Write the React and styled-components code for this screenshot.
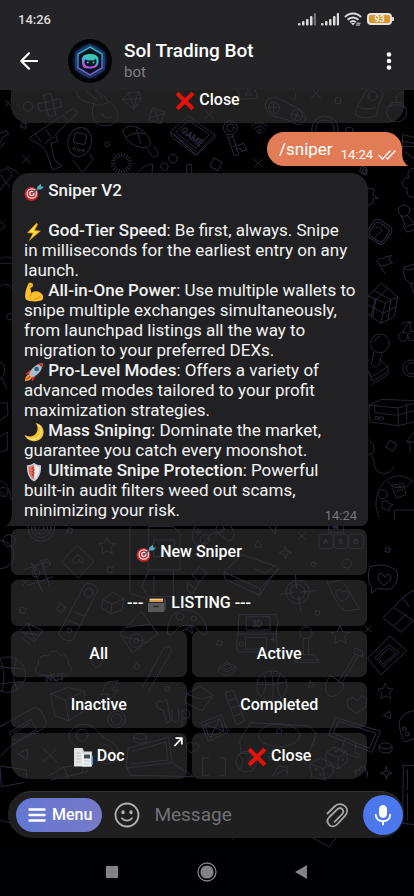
import React, { useState } from "react";
import styled, { createGlobalStyle } from "styled-components";

const features = [
  {
    icon: "bolt",
    title: "God-Tier Speed",
    text: "Be first, always. Snipe\nin milliseconds for the earliest entry on any\nlaunch.",
  },
  {
    icon: "muscle",
    title: "All-in-One Power",
    text: "Use multiple wallets to\nsnipe multiple exchanges simultaneously,\nfrom launchpad listings all the way to\nmigration to your preferred DEXs.",
  },
  {
    icon: "rocket",
    title: "Pro-Level Modes",
    text: "Offers a variety of\nadvanced modes tailored to your profit\nmaximization strategies.",
  },
  {
    icon: "moon",
    title: "Mass Sniping",
    text: "Dominate the market,\nguarantee you catch every moonshot.",
  },
  {
    icon: "shield",
    title: "Ultimate Snipe Protection",
    text: "Powerful\nbuilt-in audit filters weed out scams,\nminimizing your risk.",
  },
];

const keyboard = [
  { icon: "target", label: "New Sniper", wide: true },
  { icon: "box", label: "LISTING", wide: true, dashes: true },
  { label: "All" },
  { label: "Active" },
  { label: "Inactive" },
  { label: "Completed" },
  { icon: "doc", label: "Doc", link: true },
  { icon: "cross", label: "Close" },
];

const emojis = {
  target: (
    <>
      <circle cx="7.500" cy="12" r="7" fill="#c4202b" />
      <circle cx="7.800" cy="11.500" r="5.300" fill="#f3e9e7" />
      <circle cx="7.800" cy="11.500" r="4.100" fill="#c8242f" />
      <circle cx="7.800" cy="11.500" r="2.700" fill="#f3e9e7" />
      <circle cx="7.800" cy="11.500" r="1.400" fill="#c8242f" />
      <path d="M8 11.500 15 6" stroke="#2b6d78" strokeWidth="1.300" />
      <path d="M13 7.500 13.400 4.500 17 1.800 17 4.400 20 4.800 17 7.400Z" fill="#4fb3bf" />
    </>
  ),
  bolt: (
    <>
      <path d="M12.500 1 3 11 8.800 11.400 4.400 19.400 17 8.800 11 8.300 14 2Z" fill="#f7a81b" />
      <path d="M12.200 2 5 10 10 10.400 7 16 14.600 9.600 9.400 9Z" fill="#ffe14d" />
    </>
  ),
  muscle: (
    <>
      <path
        d="M4.500 1.200C6.800.2 9.400 1.200 9 3.600 8.800 5 7.500 5.800 6.400 5.700L7.400 11.200C9 9 13 8.400 16 10.400 19.500 12.400 20.300 16.500 17.600 18.300 14 20 5 19.600 2.300 17.800.4 16.200 1 11 2.400 6.500Z"
        fill="#fbbf2d"
      />
      <path d="M7.400 11.200C7.300 12.600 6.800 13.800 5.800 14.500M10 16.800C12.500 17.200 15 16 16 14" stroke="#d98a16" strokeWidth="1" fill="none" />
      <path d="M4.800 3.500C6 3.200 7 3.500 8.600 3.300" stroke="#d98a16" strokeWidth=".8" fill="none" />
    </>
  ),
  rocket: (
    <>
      <path d="M1 19C1 15.500 2.500 13 5 12.500L8 15.500C7 18 4 19 1 19Z" fill="#f5a623" />
      <path d="M5.500 8.500 1 12 5 13 8.500 8Z" fill="#d32f2f" />
      <path d="M11.500 14.500 8.500 19.500 7.200 15.400 11 11Z" fill="#d32f2f" />
      <path d="M5 13C6.500 7 11 2 19 1 18.500 8 14 13.500 7.500 15.500Z" fill="#a9bcc8" />
      <path d="M14.500 2.200C16 1.500 17.500 1.100 19 1 19 2.800 18.500 4.300 17.900 5.600Z" fill="#d32f2f" />
      <circle cx="12.600" cy="7" r="2.300" fill="#2d5c86" />
      <path d="M2.500 17.500 6 14" stroke="#e2461f" strokeWidth="1.500" />
    </>
  ),
  moon: (
    <>
      <path d="M11.500 1C17 2 20 6 19.500 11 19 16.500 14 20 8.500 19 4.500 18.300 1.500 16 .5 13 5 15.500 10 14.500 12.300 11 14.500 7.500 13.800 3.500 11.500 1Z" fill="#f4c534" />
      <path d="M14.500 3C18 6 18.500 11 15.500 14.500 12.500 17.700 7 18 3.500 16" stroke="#ffe386" strokeWidth="1.300" fill="none" />
    </>
  ),
  shield: (
    <>
      <path d="M3 3.200C6 3.200 8.500 2 10 .8 11.500 2 14 3.200 17 3.200 17.500 10 15.500 16.500 10 19.500 4.500 16.500 2.500 10 3 3.200Z" fill="#c3cbd0" />
      <path d="M4.600 4.700C7 4.600 9 3.600 10 2.800V17.500C6 15 4.300 10 4.600 4.700Z" fill="#ea6a5c" />
      <path d="M10 2.800C11.500 4 13.500 4.600 15.400 4.700 15.600 10 14 15 10 17.500Z" fill="#f1ece9" />
      <path d="M10 5 8.500 6.500 10 8 8.500 9.500 10 11 8.500 12.500 10 14" stroke="#b93535" strokeWidth="1.200" fill="none" />
    </>
  ),
  box: (
    <>
      <path d="M1 4H17L19 6V16L17 18H1Z" fill="#3c3e40" />
      <path d="M1 3.500H17V9H1Z" fill="#242526" />
      <path d="M3 4.500H16V8H2Z" fill="#d79a4c" />
      <path d="M2.500 5.500H16" stroke="#f2cd8b" />
      <path d="M1 9H17V18H1Z" fill="#57595b" />
      <path d="M6 12.500H12" stroke="#2b2c2d" strokeWidth="1.500" />
    </>
  ),
  doc: (
    <>
      <path d="M1 1H9.500L11 4.500H19V19.500H1Z" fill="#d6d8d9" />
      <path d="M9 6.500H18V19.500H9Z" fill="#f0f1f1" />
      <path d="M1.500 1.500H9V19H1.500Z" fill="#e3e5e5" />
      <path d="M3 6H8M3 9H8M3 12H8M3 15H8M11 14H17M11 17H16" stroke="#b9bcbd" strokeWidth=".8" />
      <path d="M11 7.500H17V11.500H11Z" fill="#454b54" />
      <path d="M18.500 8 20 9V18H18.500Z" fill="#3f8fd9" />
    </>
  ),
  cross: <path d="M3.500.8 10 7.200 16.500.8 19.300 3.600 13 10 19.300 16.500 16.500 19.300 10 12.900 3.500 19.300.7 16.500 7 10 .7 3.600Z" fill="#e3120b" />,
};

function Emoji({ name }) {
  return (
    <EmojiSvg viewBox="0 0 20 20" aria-hidden="true">
      {emojis[name]}
    </EmojiSvg>
  );
}

const Sq = ({ x, y, s = 9, r = 20 }) => (
  <rect x={x - s} y={y - s} width={s * 2} height={s * 2} transform={`rotate(${r} ${x} ${y})`} />
);
const Ex = ({ x, y, s = 12 }) => (
  <path d={`M${x - s} ${y - s}L${x + s} ${y + s}M${x + s} ${y - s}L${x - s} ${y + s}`} />
);
const Star = ({ x, y, s = 1 }) => (
  <path
    transform={`translate(${x} ${y}) scale(${s})`}
    d="M0-27 9-9 28-7 14 7 19 26 1 17-16 27-13 7-27-6-8-9Z"
  />
);

// chat wallpaper, line doodles drawn at three times their final size
function Wallpaper() {
  return (
    <WallpaperSvg viewBox="0 0 414 896" preserveAspectRatio="xMidYMid slice" aria-hidden="true">
      <defs>
        <linearGradient id="ink" gradientUnits="userSpaceOnUse" x1="0" y1="0" x2="0" y2="2688">
          <stop offset="0.1" stopColor="#2b2a40" />
          <stop offset="0.25" stopColor="#28232f" />
          <stop offset="0.5" stopColor="#25232e" />
          <stop offset="0.7" stopColor="#1a2740" />
          <stop offset="1" stopColor="#12233c" />
        </linearGradient>
      </defs>
      <g transform="scale(.33333)" fill="none" stroke="url(#ink)" strokeWidth="3" strokeLinejoin="round" strokeLinecap="round">
        <circle cx="84" cy="320" r="14" />
        <path d="M130 286 152 280 158 301 180 296 185 319 163 325 168 345 147 350 141 329 119 334 113 312 136 307Z M136 307 158 301 163 325 141 329Z" />
        <Ex x={25} y={310} s={9} />
        <Ex x={78} y={478} />
        <Ex x={775} y={490} />
        <Ex x={628} y={343} />
        <Ex x={948} y={280} s={15} />
        <path d="M230 272C220 290 262 310 282 311 264 365 300 386 334 374 366 360 355 315 324 304 310 280 290 268 264 258M282 311C290 318 314 318 324 304M305 340A20 20 0 0 0 336 350M256 272 292 300M276 262 306 292" />
        <path d="M368 298 386 277 416 275 424 296 402 327ZM368 298 424 296M386 277 393 298 402 327M416 275 407 297 402 327" />
        <Sq x={470} y={347} s={19} r={20} />
        <path d="M464 328 476 366M452 353 488 341" />
        <path d="M90 412 218 326 235 337 167 402 173 424 152 430 164 480 186 498 158 510 136 448 118 433 95 421ZM105 402 125 426M138 388 150 409M135 432C142 420 150 415 162 412M190 345 201 361" />
        <ellipse cx="239" cy="426" rx="35" ry="44" transform="rotate(12 239 426)" />
        <rect x="222" y="400" width="36" height="31" rx="7" transform="rotate(12 240 416)" />
        <circle cx="223" cy="446" r="4" />
        <circle cx="236" cy="450" r="4" />
        <circle cx="249" cy="452" r="4" />
        <path d="M218 480 248 517 279 478 270 462" />
        <path d="M368 392C380 368 420 378 438 402 454 424 458 438 440 442 412 446 376 428 368 392ZM376 414C390 402 410 394 438 402M410 388 422 430M440 442C452 450 445 466 462 470 482 474 474 442 460 440" />
        <circle cx="322" cy="433" r="7" />
        {Array.from({ length: 20 }, (_, i) => (
          <path key={i} d="M365 470V458" transform={`rotate(${i * 18} 365 490)`} />
        ))}
        <path d="M512 395 565 348 644 404 589 463ZM512 395 516 412 588 466 646 412 644 404M528 396 567 361 628 404 588 444ZM520 402 590 456" />
        <text x="540" y="398" transform="rotate(38 545 398)" fontSize="27" strokeWidth="2" fontFamily="Roboto, sans-serif">GAME</text>
        <circle cx="691" cy="383" r="21" />
        <circle cx="691" cy="383" r="11" />
        <path d="M682 404 702 466 716 464 696 402M700 440 732 430 740 450 724 454 722 444 706 448M684 414 702 408" />
        <path d="M755 380C766 364 790 364 802 380M762 388C770 376 788 376 794 388M770 394C775 387 783 387 787 394" />
        <circle cx="778" cy="398" r="3" />
        <path d="M796 312C800 290 828 288 850 302 868 314 902 324 914 342 924 364 904 378 886 372 870 362 855 356 832 352 806 346 794 330 796 312Z" />
        <circle cx="822" cy="323" r="17" />
        <circle cx="891" cy="345" r="17" />
        <path d="M820 312V334M810 322H833M880 342 900 350M893 335 886 358M880 300C900 288 872 270 884 262" />
        <path d="M714 266 766 270 774 294 722 298ZM736 284 744 272 756 284Z" />
        <Sq x={1014} y={302} s={8} r={5} />
        <path d="M1066 344C1066 310 1090 300 1090 286 1096 264 1130 260 1148 276 1152 300 1132 308 1130 346 1106 358 1080 354 1066 344ZM1076 320C1090 328 1110 330 1126 322" />
        <circle cx="1118" cy="288" r="14" />
        <circle cx="975" cy="388" r="40" />
        <circle cx="975" cy="388" r="28" />
        <circle cx="1048" cy="392" r="11" />
        <circle cx="1190" cy="336" r="30" />
        <path d="M1190 306C1184 290 1192 280 1210 276M1168 320C1180 312 1200 312 1214 322" />
        <circle cx="519" cy="476" r="13" />
        <circle cx="493" cy="500" r="11" />
        <Sq x={648} y={493} s={14} r={30} />
        <Sq x={71} y={376} s={7} r={25} />
        <path d="M0 400 20 392 26 402 8 412 0 430M0 445 14 428M412 520C424 502 440 494 458 492L456 524M560 520V494H575V520M0 515C14 500 34 506 36 528M20 500C30 508 50 506 54 522" />
        <Sq x={1094} y={516} s={7} r={20} />
        <path d="M1210 404 1242 412M1208 424 1242 430M1206 440H1242M1215 455 1242 476M1208 404 1206 480" />

        {/* left edge */}
        <path d="M0 524 30 562M0 570 34 530M0 664 18 680 0 690M0 778C8 768 28 770 36 776M0 790H36M0 860C12 850 28 850 36 866M0 1086C20 1090 18 1130 0 1136M6 1136 20 1166M0 1210 22 1208 24 1244 0 1262M0 1310 22 1296 22 1350 0 1356M0 1442C20 1446 30 1470 34 1500M0 1476 20 1492" />
        <circle cx="30" cy="950" r="10" />
        <circle cx="10" cy="1476" r="14" />

        {/* right edge */}
        <g transform="translate(1020 480)">
          <Sq x={70} y={30} s={9} r={15} />
          <path d="M84 84 104 88 98 104 116 116 100 114 98 130 86 136M222 26C204 22 200 48 208 52 182 52 180 84 202 84 196 108 214 118 222 110" />
          <rect x="86" y="184" width="62" height="62" rx="14" transform="rotate(34 117 217)" />
          <rect x="93" y="192" width="48" height="48" rx="9" transform="rotate(34 117 217)" />
          <path d="M105 206C112 196 128 202 124 214 120 220 112 216 110 228M107 236 108 238" />
          <circle cx="192" cy="152" r="17" />
          <path d="M184 168 196 200M202 166 222 190M190 200 200 216 222 210M196 200 222 192" />
          <path d="M110 302 136 342M112 300C122 290 126 300 134 292L154 286 146 300 158 308C144 310 138 320 128 316L120 318" />
          <path d="M222 312 192 322C186 354 202 370 222 372M192 324C206 332 214 328 222 324M212 372 222 400" />
          <path d="M85 408 124 370 173 410 163 470 122 490 76 456ZM85 408 136 430 173 410M136 430 122 490M103 392 152 420 144 480M105 418 94 470M142 386 108 418 98 472M80 432 130 460 168 440" />
          <circle cx="190" cy="530" r="14" />
          <circle cx="217" cy="528" r="14" />
          <path d="M190 515C194 500 202 494 208 486L214 514M184 494C194 484 206 484 216 488" />
          <circle cx="120" cy="550" r="28" />
          <path d="M103 548C104 536 112 530 120 530M102 576 94 614C100 624 114 622 118 612L126 578M90 598 76 614 98 664 146 634 142 618 122 602M76 622 96 650 142 620M96 674 148 640" />
          <circle cx="214" cy="625" r="25" />
          <circle cx="216" cy="625" r="17" />
          <path d="M87 735 126 718 222 722M87 735 88 776 94 786 175 797 222 786M87 735 174 744 175 797M174 744 222 730M104 738V758L174 766 222 752M106 770H116V778H106ZM120 771H130V780H120ZM200 730V786" />
          <path d="M84 838 100 854 102 876 84 886M94 884C108 910 98 940 132 940 148 940 156 930 162 920M222 818 198 846H210V878M204 846H222" />
          <Sq x={154} y={857} s={12} r={30} />
          <path d="M108 1040C106 980 140 946 180 948 206 950 222 966 222 966M116 1070 108 1040M144 962C152 990 208 990 214 964M162 1080 164 1050H222M128 1024 142 1022 146 1030 160 1034 150 1040 148 1054 138 1046 128 1046Z" />
          <circle cx="128" cy="1003" r="14" />
          <path d="M156 976 190 970 198 1004 170 1014ZM166 982 186 978M168 994 188 990" />
        </g>

        {/* behind the keyboard */}
        <g transform="translate(0 1560)">
          <circle cx="124" cy="24" r="40" />
          <circle cx="124" cy="24" r="29" />
          <circle cx="124" cy="24" r="18" />
          <circle cx="124" cy="24" r="8" />
          <Sq x={210} y={32} s={7} />
          <Sq x={332} y={149} s={8} r={0} />
          <Sq x={68} y={271} s={8} />
          <Sq x={183} y={265} s={10} r={40} />
          <Sq x={940} y={133} s={6} />
          <Sq x={952} y={279} s={6} />
          <Sq x={1163} y={90} s={6} />
          <Sq x={659} y={369} s={7} />
          <Sq x={410} y={439} s={7} r={35} />
          <Star x={320} y={77} s={0.9} />
          <Star x={1020} y={344} />
          <Star x={1156} y={513} s={0.85} />
          <path d="M186 124 232 76 282 124 236 174ZM232 104C216 118 214 128 226 130 234 130 236 126 238 118 240 132 252 130 250 120 248 110 240 108 232 104Z" />
          <path d="M70 150 142 126M82 196 158 170M94 128 126 214M122 120 150 200M66 178 84 192M84 176 68 196M98 132 112 146M112 132 100 148" />
          <circle cx="139" cy="130" r="11" />
          <circle cx="108" cy="160" r="11" />
          <path d="M390 10V220L450 240M390 10 430 0M446 20H520L540 40V150H446ZM446 150 426 200 444 230H520V150M462 60H524V110H462ZM462 220V170" />
          <path d="M578 50C576 12 596 10 622 14 650 22 660 0 686 14 708 30 706 58 690 62 672 62 668 40 648 38 624 36 616 80 594 76 584 74 578 62 578 50Z" />
          <circle cx="614" cy="58" r="14" />
          <circle cx="660" cy="26" r="12" />
          <path d="M594 26V46M584 36H604M790 0 826 42 830 0" />
          <Ex x={906} y={48} s={10} />
          <path d="M774 62 786 82 764 80ZM856 80 861 94 876 98 861 103 857 116 852 103 838 98 852 93Z" />
          <rect x="957" y="42" width="43" height="44" rx="10" />
          <rect x="1002" y="42" width="42" height="44" rx="10" />
          <rect x="1046" y="42" width="44" height="44" rx="10" />
          <path d="M986 36V6L1008 0 1030 6V36Z" />
          <g fontSize="23" strokeWidth="2" fontFamily="Roboto, sans-serif">
            <text x="970" y="73">A</text>
            <text x="1015" y="73">S</text>
            <text x="1060" y="73">D</text>
            <text x="997" y="28">W</text>
          </g>
          <circle cx="1041" cy="131" r="14" />
          <path d="M672 156 726 104 836 142 794 202 780 226 676 178ZM672 156 780 206 836 148M764 146 796 160 824 138M780 206V226" />
          <path d="M576 164 598 140 620 160 598 186ZM564 188 586 208 578 222 562 210ZM598 186 586 208" />
          <circle cx="893" cy="216" r="35" />
          <circle cx="893" cy="216" r="22" />
          <path d="M886 164 890 206M842 222 882 218M904 216 946 212M896 228 902 272" />
          <path d="M982 188 1020 182C1030 184 1044 206 1078 268L1034 272C1012 260 996 216 982 188ZM1028 244C1004 232 1004 214 1014 210 1022 206 1026 214 1028 218 1034 206 1050 214 1046 226 1044 236 1036 240 1028 244Z" />
          <path d="M1110 140C1136 130 1170 136 1190 152 1198 174 1188 202 1166 208L1130 206 1114 220 1116 202C1104 196 1102 160 1110 140ZM1152 196C1130 182 1130 160 1140 160 1150 158 1152 168 1154 172 1160 156 1178 164 1172 178 1168 186 1160 190 1152 196Z" />
          <path d="M1150 292 1180 262 1240 302 1204 336ZM1182 262 1208 232 1242 210M1208 234 1228 260M1182 316 1220 282" />
          <path d="M256 192C270 186 290 196 294 210L218 360C206 368 182 356 176 342ZM222 276 254 288M238 314 206 302" />
          <circle cx="266" cy="218" r="13" />
          <circle cx="208" cy="332" r="7" />
          <path d="M309 240 338 216 372 236 366 270 332 282 306 264ZM309 240 336 252 372 236M336 252 332 282" />
          <path d="M60 330 82 310 128 332 104 364ZM64 352 90 372M82 310 106 362M72 338 118 346" />
          <path d="M360 340 424 274 474 342 398 398ZM380 322 452 312 474 342M372 350 442 366" />
          <circle cx="409" cy="362" r="20" />
          <circle cx="409" cy="362" r="8" />
          <path d="M503 340C500 296 524 268 560 270 602 270 624 310 620 342 610 350 600 338 590 324 572 312 546 312 532 326 522 338 514 352 503 340ZM546 334 574 318 578 340 560 330" />
          <circle cx="540" cy="290" r="11" />
          <circle cx="582" cy="296" r="8" />
          <circle cx="1" cy="104" r="42" />
          <circle cx="28" cy="62" r="18" />
          <path d="M720 284H828L834 306 828 340 832 384C830 396 820 398 810 396H718C708 394 708 382 714 338L716 300ZM740 290H810V330H740ZM738 352H800V388H738ZM714 342H832" />
          <text x="756" y="322" fontSize="25" strokeWidth="2" fontFamily="Roboto, sans-serif">3D</text>
          <circle cx="724" cy="372" r="7" />
          <path d="M820 350V366M812 358H828" />
          <circle cx="918" cy="338" r="18" />
          <path d="M910 356V404M926 356V404M896 404H940L956 420H886ZM886 420V428H956V420" />
          <path d="M1066 384 1086 392 1088 410 1064 402ZM1066 404 1016 484M1074 410 1026 488M992 466 1030 492C1034 510 1016 530 990 530 970 516 974 486 992 466Z" />
          <path d="M1104 414 1170 348 1220 392 1144 464ZM1126 412 1166 374 1198 398 1150 440ZM1136 412 1168 384 1188 400 1150 432Z" />
          <Ex x={1104} y={327} s={8} />
          <path d="M656 442 680 426 708 440 706 452 682 468 656 456ZM656 442 682 456 708 440M668 440 682 432 696 440 682 448Z" />
          <circle cx="816" cy="498" r="46" />
          <path d="M772 490C800 500 840 490 860 484M812 452C824 480 820 520 816 544M790 460C802 484 800 510 784 530M842 460C828 480 832 520 844 534M932 482 944 500 926 502Z" />
          <path d="M116 432C110 414 128 402 144 408 150 390 174 388 180 406 200 400 210 420 204 432 220 440 214 462 202 464L170 484 150 466 120 466C100 456 104 438 116 432Z" />
          <text x="136" y="484" transform="rotate(-5 150 476)" fontSize="30" strokeWidth="2" fontFamily="Roboto, sans-serif">NUT</text>
          <circle cx="24" cy="464" r="53" />
          <path d="M0 416C14 450 16 490 4 516M0 440 74 448M0 492 70 484M50 418C36 450 40 490 52 508" />
          <path d="M428 500 492 384C502 376 516 382 514 394L446 514M280 434C264 412 276 386 292 384 310 386 318 412 302 434 294 446 284 444 280 434ZM280 400H306" />
          <path d="M322 486 354 482 336 512 356 510 316 552 326 522 304 524Z" />
        </g>
        <g transform="translate(0 2040)">
          <path d="M152 42 196 60 206 122 166 108ZM196 60 254 34 256 90 206 122M152 42 204 22 254 34M560 42 600 18 640 46 606 92 556 68ZM560 42 602 58 640 46" />
          <path d="M0 140 100 84C116 80 130 96 138 128 138 152 110 150 98 162L34 196 0 230M28 158 92 118 110 148 50 184ZM40 160 88 130" />
          <path d="M676 38 700 30 734 122 710 134ZM684 62 710 54M692 84 718 76M702 108 726 100" />
          <path d="M1042 60 1060 52 1072 62 1086 46 1100 58 1096 82 1070 100 1046 84ZM1168 94 1150 106 1172 116Z" />
          <path d="M472 84C462 66 478 58 490 66L500 58 512 122 500 130 490 92ZM516 86V116C520 130 534 128 536 116V86M546 136V92C562 84 576 96 566 112L550 118" />
          <circle cx="350" cy="118" r="26" />
          <circle cx="350" cy="118" r="16" />
          <path d="M986 164 1006 112 1142 154 1116 216ZM1000 158 1016 124 1128 160 1108 204ZM1034 180 1026 206 1012 210 1074 234 1082 224 1064 218 1068 190" />
          <path d="M720 180 752 128 930 138 948 162 926 220H724ZM948 162 940 200" />
          <ellipse cx="838" cy="166" rx="62" ry="34" />
          <circle cx="838" cy="154" r="8" />
          <path d="M604 128 664 104 684 156 626 184ZM614 134 660 116 672 152 630 172ZM614 134 672 152M660 116 630 172" />
          <path d="M208 160C224 130 246 130 270 136 292 144 298 170 320 178 350 186 368 224 350 242 326 258 292 250 276 232 266 214 232 206 216 190 208 180 204 170 208 160Z" />
          <circle cx="246" cy="166" r="18" />
          <circle cx="316" cy="216" r="22" />
          <circle cx="502" cy="26" r="7" />
          <path d="M402 170C410 156 432 156 440 172V184C428 192 412 190 402 184ZM402 172C412 180 430 180 440 172" />
          <Ex x={150} y={226} s={20} />
          <path d="M82 208 54 222 80 238Z" />
          <path d="M386 204 506 172 516 248 380 264ZM396 214 498 186 504 240 392 252M380 264 392 286 580 290 516 248M0 258 80 270V292M0 262 4 320 70 308M146 288 190 262 252 254 264 274 200 290 152 300M190 262 206 292M252 254 246 280" />
          <path d="M560 204C556 184 576 184 580 194 588 180 604 196 592 208L574 218ZM608 234V286H626M608 234H626M660 234H676V286H660" />
          <circle cx="739" cy="245" r="31" />
          <path d="M716 224C740 240 724 262 718 268M760 222C738 240 748 260 764 266M808 230 820 226 822 238 810 240Z" />
          <path d="M978 218 1002 202 1040 214 1042 244 1014 266 980 254ZM978 218 1014 232 1040 214M1014 232V266M930 250 962 234 998 252 1000 278 976 300 936 292ZM930 250 968 266 998 252M968 266 976 300" />
          <circle cx="1008" cy="214" r="3" />
          <circle cx="1028" cy="240" r="3" />
          <circle cx="948" cy="268" r="3" />
          <circle cx="962" cy="284" r="3" />
          <path d="M816 290 836 258 864 262 860 290M830 284 850 270 860 274M1066 284V270H1078L1082 260 1098 264 1096 276 1104 278 1100 292M1159 260 1163 274 1176 280 1163 284 1160 298 1155 284 1142 280 1155 274ZM1138 196C1146 186 1168 186 1176 198V212C1166 222 1146 220 1138 212ZM1138 200C1150 208 1166 208 1176 200M1242 92C1210 96 1194 120 1198 136 1200 160 1210 180 1216 186L1242 176M1208 256H1242M1210 258 1208 430 1242 434M1222 268V330M1222 340V420" />
          <circle cx="1213" cy="146" r="6" />
          <circle cx="1222" cy="162" r="6" />
          <path d="M868 436 988 500 1014 466M902 428 996 470M1118 452C1116 434 1134 436 1142 444 1150 430 1170 434 1166 450L1162 466H1126ZM664 440C676 470 692 440 700 478M0 420 70 440" />
        </g>
      </g>
    </WallpaperSvg>
  );
}

function SignalIcon({ weak }) {
  return (
    <svg width="18" height="13" viewBox="0 0 18 13" fill="#dcdcdc" aria-hidden="true">
      <rect x="0" y="10" width="2.500" height="2.500" rx="1" />
      <rect x="4" y="8" width="2.500" height="4.500" rx="1" />
      <rect x="8" y="6" width="2.500" height="6.500" rx="1" />
      <rect x="12" y="3" width="2.500" height="9.500" rx="1" />
      <rect x="15.800" y="0" width="2.200" height="12.500" rx="1" fill={weak ? "#717173" : "#dcdcdc"} />
    </svg>
  );
}

function Keyboard({ buttons }) {
  return (
    <KeyboardGrid>
      {buttons.map((b) =>
        b.link ? (
          <KeyLink key={b.label} href="#doc">
            <Emoji name={b.icon} /> {b.label}
            <LinkArrow viewBox="0 0 10 10" aria-hidden="true">
              <path d="M1.500 9 8.500 1.500M2.500 1.200H8.800V7.500" />
            </LinkArrow>
          </KeyLink>
        ) : (
          <Key key={b.label} type="button" $wide={b.wide}>
            {b.dashes && "--- "}
            {b.icon && <Emoji name={b.icon} />} {b.label}
            {b.dashes && " ---"}
          </Key>
        )
      )}
    </KeyboardGrid>
  );
}

export default function App() {
  const [message, setMessage] = useState("");

  return (
    <>
      <GlobalStyle />
      <Screen>
        <Wallpaper />
        <Header>
          <StatusBar>
            <span>14:26</span>
            <StatusIcons>
              <SignalIcon weak />
              <SignalIcon />
              <svg width="18" height="14" viewBox="0 0 18 14" fill="none" stroke="#dcdcdc" strokeWidth="2" aria-hidden="true">
                <path d="M1 5C5.500.2 12.500.2 17 5M3.600 7.800C6.700 4.600 11.300 4.600 14.400 7.800M6.200 10.200C8 8.600 10 8.600 11.800 10.200" />
                <path d="M7 11 9 13.500 11 11Z" fill="#dcdcdc" stroke="none" />
                <path d="M12.500 11.200H16.500M12 13H16" strokeWidth="1" />
              </svg>
              <Battery>93</Battery>
            </StatusIcons>
          </StatusBar>
          <TitleBar>
            <IconButton type="button" aria-label="Back">
              <svg width="18" height="18" viewBox="0 0 18 18" fill="none" stroke="#fff" strokeWidth="2.200" strokeLinecap="round" strokeLinejoin="round">
                <path d="M17 9H1.500M9 1.300 1.300 9 9 16.700" />
              </svg>
            </IconButton>
            <Avatar viewBox="0 0 44 44" aria-hidden="true">
              <defs>
                <linearGradient id="neon" x1="0" y1="0" x2="0" y2="1">
                  <stop offset="0" stopColor="#35b7c4" />
                  <stop offset="0.55" stopColor="#3d7fc9" />
                  <stop offset="1" stopColor="#8e55c9" />
                </linearGradient>
                <linearGradient id="face" x1=".6" y1="0" x2=".3" y2="1">
                  <stop offset="0" stopColor="#35d3a5" />
                  <stop offset="0.5" stopColor="#4ba9cf" />
                  <stop offset="0.8" stopColor="#b34fd6" />
                </linearGradient>
                <radialGradient id="glow">
                  <stop offset="0.5" stopColor="#10243c" />
                  <stop offset="0.7" stopColor="#172b55" />
                  <stop offset="0.92" stopColor="#020306" />
                </radialGradient>
              </defs>
              <circle cx="22" cy="22" r="22" fill="#020306" />
              <circle cx="22" cy="22" r="20" fill="url(#glow)" />
              <path d="M22 5.500 36 13.500V30.500L22 38.500 8 30.500V13.500Z" fill="none" stroke="#2a4f96" opacity=".5" strokeWidth="2" />
              <path d="M22 8 34 15V29L22 36 10 29V15Z" fill="#071420" stroke="url(#neon)" strokeWidth="1.500" />
              <path d="M14 21C13.500 17 17 15 22 15S31 17 30.500 21.500C31.500 26 28 29.500 23 29.500H19C15 29.500 13.500 26 14 21Z" fill="url(#face)" />
              <path d="M17 20.500 20 21.500H26L28 19.500 28.500 23.500C27.500 26.500 25 27.500 22 27.500S17 26.500 16.500 23.500Z" fill="#071420" />
              <circle cx="19.800" cy="23.500" r="1" fill="#3ecbb8" />
              <circle cx="25.500" cy="23.500" r="1" fill="#3ecbb8" />
            </Avatar>
            <Names>
              <Name>Sol Trading Bot</Name>
              <Kind>bot</Kind>
            </Names>
            <IconButton type="button" aria-label="More options">
              <svg width="6" height="18" viewBox="0 0 6 18" fill="#fff">
                <circle cx="3" cy="2.500" r="2.300" />
                <circle cx="3" cy="9" r="2.300" />
                <circle cx="3" cy="15.500" r="2.300" />
              </svg>
            </IconButton>
          </TitleBar>
        </Header>

        <Chat>
          <PastKey type="button">
            <Emoji name="cross" /> Close
          </PastKey>
          <Outgoing>
            /sniper
            <SentTime>
              14:24
              <svg width="18" height="10" viewBox="0 0 18 10" fill="none" stroke="#fff" strokeWidth="1.400" strokeLinecap="round" aria-label="Read">
                <path d="M1 5.500 4.500 9 12 1M8.500 8 9.500 9 17 1" />
              </svg>
            </SentTime>
            <OutTail viewBox="0 0 10 14" aria-hidden="true">
              <path d="M0 0H4C4 7 6 11 10 14H0Z" />
            </OutTail>
          </Outgoing>
          <Incoming>
            <Title>
              <Emoji name="target" /> Sniper V2
            </Title>
            {features.map((f) => (
              <p key={f.title}>
                <Emoji name={f.icon} /> <b>{f.title}</b>: {f.text}
                {f.icon === "shield" && <Time>14:24</Time>}
              </p>
            ))}
            <InTail viewBox="0 0 10 14" aria-hidden="true">
              <path d="M10 0H6C6 7 4 11 0 14H10Z" />
            </InTail>
          </Incoming>
          <Keyboard buttons={keyboard} />
        </Chat>

        <Composer onSubmit={(e) => e.preventDefault()}>
          <MenuButton type="button">
            <svg width="18" height="14" viewBox="0 0 18 14" stroke="#fff" strokeWidth="2.400" strokeLinecap="round" aria-hidden="true">
              <path d="M1.500 1.500H16.500M1.500 7H16.500M1.500 12.500H16.500" />
            </svg>
            Menu
          </MenuButton>
          <IconButton type="button" aria-label="Emoji">
            <svg width="26" height="26" viewBox="0 0 26 26" fill="none" stroke="#b0b0b0" strokeWidth="1.800" strokeLinecap="round">
              <circle cx="13" cy="13" r="11.500" />
              <path d="M8 16.200C10.500 19.400 15.500 19.400 18 16.200" />
              <ellipse cx="9" cy="10.200" rx=".8" ry="1.100" fill="#b0b0b0" />
              <ellipse cx="17" cy="10.200" rx=".8" ry="1.100" fill="#b0b0b0" />
            </svg>
          </IconButton>
          <MessageInput
            aria-label="Message"
            placeholder="Message"
            value={message}
            onChange={(e) => setMessage(e.target.value)}
          />
          <IconButton type="button" aria-label="Attach">
            <svg width="24" height="26" viewBox="0 0 24 26" fill="none" stroke="#a8a8a8" strokeWidth="1.800" strokeLinecap="round">
              <path d="M2.500 11.500 9.500 4.500C12.500 1.500 17 1.500 20 4.200 23 7 22.500 11 20 13.800L12.500 22C10 24.800 6.500 25 4.200 22.800 2 20.600 2 17.500 4.400 15L12.200 7.300C13.800 5.800 16 5.900 17.300 7.200 18.600 8.600 18.600 10.600 17 12.300L9.500 19.800" />
            </svg>
          </IconButton>
          <MicButton type="button" aria-label="Record voice message">
            <svg width="18" height="22" viewBox="0 0 18 22" fill="none" stroke="#fff" strokeWidth="2" strokeLinecap="round">
              <rect x="5.500" y="1.500" width="7" height="12" rx="3.500" fill="#fff" stroke="#fff" strokeWidth="1" />
              <path d="M1.800 11C2.200 19.200 15.800 19.200 16.200 11M9 17.500V20.500" />
            </svg>
          </MicButton>
        </Composer>

        <SystemNav aria-label="System">
          <IconButton type="button" aria-label="Recent apps">
            <svg width="20" height="20" viewBox="0 0 20 20" fill="#828284">
              <rect x="4" y="4" width="12" height="12" />
            </svg>
          </IconButton>
          <IconButton type="button" aria-label="Home">
            <svg width="20" height="20" viewBox="0 0 20 20" fill="#828284">
              <circle cx="10" cy="10" r="6.600" />
              <circle cx="10" cy="10" r="9" fill="none" stroke="#828284" strokeWidth="1.300" />
            </svg>
          </IconButton>
          <IconButton type="button" aria-label="Back one screen">
            <svg width="20" height="20" viewBox="0 0 20 20" fill="#828284">
              <path d="M15 3V17L3 10Z" />
            </svg>
          </IconButton>
        </SystemNav>
      </Screen>
    </>
  );
}

const GlobalStyle = createGlobalStyle`
  * {
    box-sizing: border-box;
  }
  body {
    margin: 0;
    background: #000;
    color: #f2f2f2;
    font-family: Roboto, "Liberation Sans", sans-serif;
  }
  button, input {
    font-family: inherit;
  }
  p {
    margin: 0;
  }
`;

const Screen = styled.div`
  position: relative;
  display: flex;
  flex-direction: column;
  height: 100vh;
  overflow: hidden;
  isolation: isolate;
`;

const WallpaperSvg = styled.svg`
  position: absolute;
  inset: 0;
  width: 100%;
  height: 100%;
  z-index: -1;
`;

const EmojiSvg = styled.svg`
  width: 20px;
  height: 20px;
  vertical-align: -4px;
  margin: -2px 0;
`;

const Header = styled.header`
  flex-shrink: 0;
  background: #242426;
`;

const StatusBar = styled.div`
  display: flex;
  justify-content: space-between;
  align-items: center;
  height: 38px;
  padding: 0 20px 0 18px;
  font-size: 13px;
  font-weight: 500;
  color: #dcdcdc;
`;

const StatusIcons = styled.div`
  display: flex;
  align-items: center;
  gap: 5px;
`;

const Battery = styled.span`
  position: relative;
  width: 25px;
  height: 12px;
  margin-right: 2px;
  border: 2px solid #e4e4e4;
  border-radius: 4px;
  background: #d9962c;
  color: #fff;
  font-size: 9px;
  line-height: 8px;
  text-align: center;
  &::after {
    content: "";
    position: absolute;
    right: -4px;
    top: 2px;
    width: 2px;
    height: 4px;
    background: #dcdcdc;
  }
`;

const IconButton = styled.button`
  display: flex;
  justify-content: center;
  align-items: center;
  padding: 0;
  border: 0;
  background: none;
  cursor: pointer;
`;

const TitleBar = styled.div`
  display: flex;
  align-items: center;
  height: 52px;
  padding: 0 22px 7px 20px;
`;

const Avatar = styled.svg`
  width: 44px;
  height: 44px;
  margin: 0 12px 0 30px;
`;

const Names = styled.div`
  flex: 1;
`;

const Name = styled.h1`
  margin: 0;
  font-size: 19px;
  line-height: 22px;
  font-weight: 500;
  color: #fff;
`;

const Kind = styled.div`
  font-size: 15px;
  line-height: 20px;
  color: #7e7e80;
`;

const Chat = styled.main`
  flex: 1;
  min-height: 0;
  display: flex;
  flex-direction: column;
  justify-content: flex-end;
  overflow: hidden;
  padding: 0 10px 12px 11px;
  > * {
    flex-shrink: 0;
  }
`;

const Key = styled.button`
  position: relative;
  grid-column: ${(props) => (props.$wide ? "1 / -1" : "auto")};
  height: 46px;
  padding: 0;
  border: 0;
  border-radius: 7px;
  background: rgba(54, 54, 54, 0.6);
  color: #fff;
  font-size: 16px;
  font-weight: 500;
  line-height: 46px;
  text-align: center;
  text-decoration: none;
  cursor: pointer;
`;

const KeyLink = styled(Key).attrs({ as: "a" })``;

const PastKey = styled(Key)`
  margin-bottom: 9px;
  border-radius: 7px 7px 17px 17px;
`;

const KeyboardGrid = styled.div`
  display: grid;
  grid-template-columns: 1fr 1fr;
  gap: 5px;
  margin-right: 37px;
  ${Key}:nth-last-child(2) {
    border-bottom-left-radius: 17px;
  }
  ${Key}:last-child {
    border-bottom-right-radius: 17px;
  }
`;

const LinkArrow = styled.svg`
  position: absolute;
  top: 4px;
  right: 4px;
  width: 10px;
  height: 10px;
  fill: none;
  stroke: #fff;
  stroke-width: 1.8px;
`;

const Outgoing = styled.div`
  position: relative;
  align-self: flex-end;
  display: flex;
  align-items: center;
  gap: 8px;
  height: 34px;
  margin: 0 2px 7px 0;
  padding: 0 6px 0 12px;
  border-radius: 17px 17px 4px 17px;
  background: #e27c56;
  color: #fff;
  font-size: 17px;
`;

const SentTime = styled.span`
  display: flex;
  align-items: center;
  gap: 5px;
  padding-top: 11px;
  font-size: 13px;
`;

const OutTail = styled.svg`
  position: absolute;
  right: -6px;
  bottom: 0;
  width: 10px;
  height: 14px;
  fill: #e27c56;
`;

const Incoming = styled.article`
  position: relative;
  margin: 0 36px 3px 1px;
  padding: 7px 9px 6px 12px;
  border-radius: 17px 17px 7px 4px;
  background: #212123;
  font-size: 17px;
  line-height: 20px;
  white-space: pre-line;
  b {
    font-weight: 500;
  }
`;

const Title = styled.p`
  font-weight: 500;
  && {
    margin-bottom: 20px;
  }
`;

const Time = styled.time`
  float: right;
  margin: 6px 2px -6px 0;
  font-size: 13px;
  color: #77777a;
`;

const InTail = styled.svg`
  position: absolute;
  left: -6px;
  bottom: 0;
  width: 10px;
  height: 14px;
  fill: #212123;
`;

const Composer = styled.form`
  flex-shrink: 0;
  display: flex;
  align-items: center;
  height: 47px;
  margin: 0 10px 10px 8px;
  padding: 0 1px 0 8px;
  border-radius: 24px;
  background: #1f1f20;
  box-shadow: inset 0 1px 0 #303031;
`;

const MenuButton = styled.button`
  display: flex;
  align-items: center;
  gap: 6px;
  height: 34px;
  margin-right: 12px;
  padding: 0 10px 0 12px;
  border: 0;
  border-radius: 17px;
  background: linear-gradient(90deg, #6377d2, #777ac8);
  color: #fff;
  font-size: 16px;
  font-weight: 500;
  cursor: pointer;
`;

const MessageInput = styled.input`
  flex: 1;
  min-width: 0;
  padding: 0 0 0 14px;
  border: 0;
  outline: 0;
  background: none;
  color: #fff;
  font-size: 19px;
  &::placeholder {
    color: #727274;
  }
`;

const MicButton = styled(IconButton)`
  width: 40px;
  height: 40px;
  margin-left: 14px;
  border-radius: 50%;
  background: #4c78ef;
`;

const SystemNav = styled.nav`
  flex-shrink: 0;
  display: flex;
  justify-content: center;
  align-items: center;
  gap: 75px;
  height: 48px;
  background: rgba(0, 2, 5, 0.7);
`;
